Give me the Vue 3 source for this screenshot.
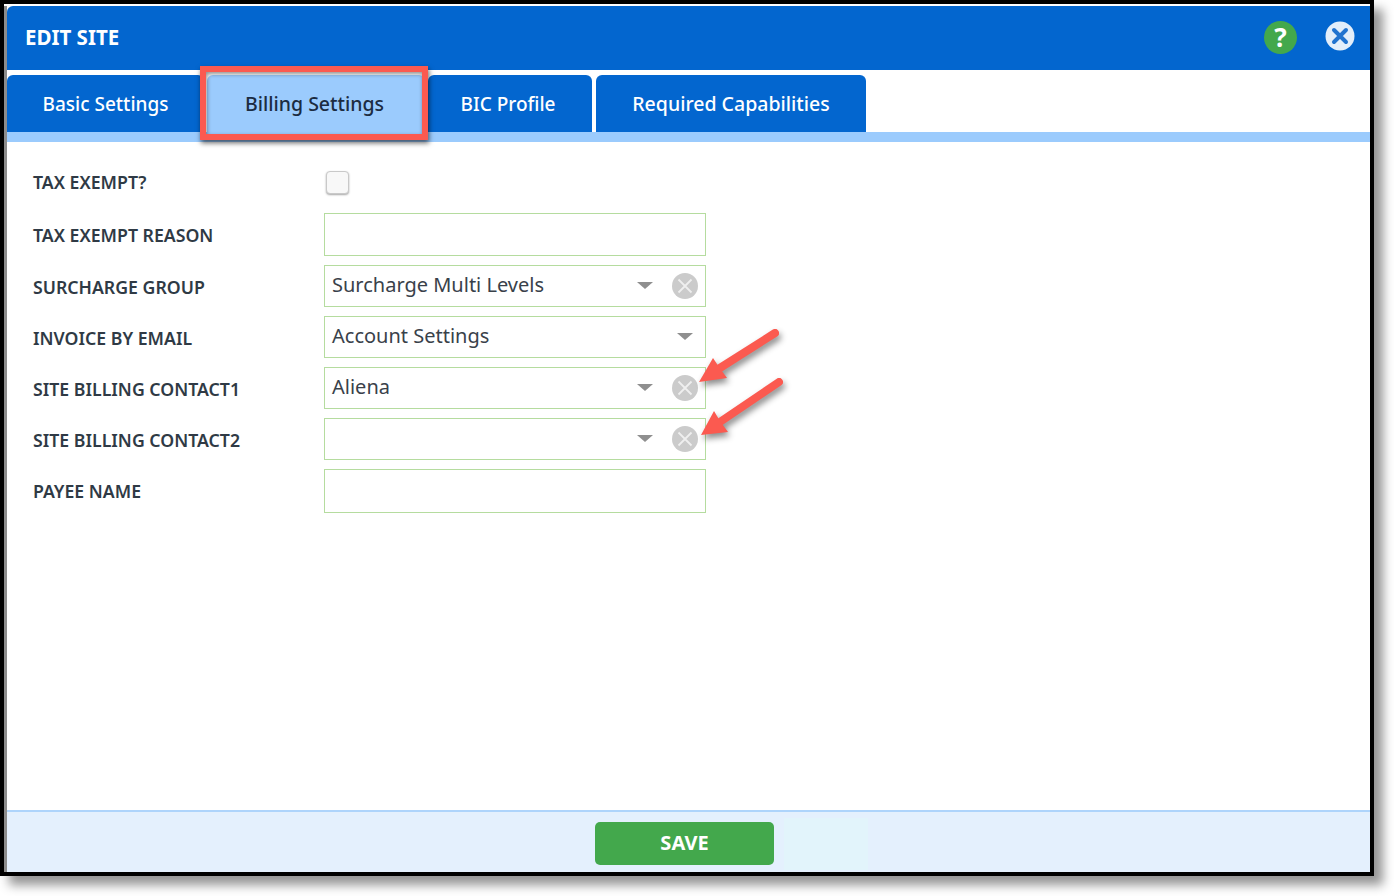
<script setup>
const tabs = [
  { label: 'Basic Settings', cls: 'basic' },
  { label: 'Billing Settings', cls: 'billing' },
  { label: 'BIC Profile', cls: 'bic' },
  { label: 'Required Capabilities', cls: 'caps' }
]
const rows = [
  { label: 'TAX EXEMPT?', type: 'check' },
  { label: 'TAX EXEMPT REASON', type: 'input', h: 43 },
  { label: 'SURCHARGE GROUP', type: 'select', value: 'Surcharge Multi Levels', clear: true, h: 42 },
  { label: 'INVOICE BY EMAIL', type: 'select', value: 'Account Settings', clear: false, h: 42 },
  { label: 'SITE BILLING CONTACT1', type: 'select', value: 'Aliena', clear: true, h: 42 },
  { label: 'SITE BILLING CONTACT2', type: 'select', value: '', clear: true, h: 42 },
  { label: 'PAYEE NAME', type: 'input', h: 44 }
]
</script>

<template>
  <div class="page">
    <div class="frame">
      <div class="window">
        <header class="titlebar">
          <h1 class="title">EDIT SITE</h1>
          <div class="title-icons">
            <span class="help">?</span>
            <svg class="close" width="30" height="30" viewBox="0 0 30 30">
              <circle cx="15" cy="15" r="14.5" fill="#e3eefa" />
              <path d="M9 9 L21 21 M21 9 L9 21" stroke="#2273cf" stroke-width="4" stroke-linecap="round" />
            </svg>
          </div>
        </header>
        <nav class="tabs">
          <div v-for="t in tabs" :key="t.label" class="tab" :class="t.cls">{{ t.label }}</div>
        </nav>
        <main class="form">
          <div v-for="r in rows" :key="r.label" class="row" :class="'row-' + r.type">
            <label class="label">{{ r.label }}</label>
            <span v-if="r.type === 'check'" class="check"></span>
            <div v-else class="field" :style="{ height: r.h + 'px' }">
              <template v-if="r.type === 'select'">
                <span class="value">{{ r.value }}</span>
                <span class="caret" :class="{ far: !r.clear }"></span>
                <svg v-if="r.clear" class="clear" width="26" height="26" viewBox="0 0 26 26">
                  <circle cx="13" cy="13" r="13" fill="#cbcbcb" />
                  <path d="M6.5 6.5 L19.5 19.5 M19.5 6.5 L6.5 19.5" stroke="#efefef" stroke-width="1.8" />
                </svg>
              </template>
            </div>
          </div>
        </main>
        <footer class="footer">
          <button class="save">SAVE</button>
          <span class="ghost"></span>
        </footer>
      </div>

      <div class="callout"></div>
      <svg class="arrows" width="1374" height="876" viewBox="0 0 1374 876">
        <g class="arrow">
          <line x1="775" y1="333" x2="712" y2="373" stroke="#fb5a50" stroke-width="8" stroke-linecap="round" />
          <polygon points="699,382 713,358 719,367 727,378" fill="#fb5a50" />
        </g>
        <g class="arrow">
          <line x1="779" y1="382" x2="714" y2="426" stroke="#fb5a50" stroke-width="8" stroke-linecap="round" />
          <polygon points="701,435 714,411 720,421 728,432" fill="#fb5a50" />
        </g>
      </svg>
    </div>
  </div>
</template>

<style scoped>
.page {
  height: 896px;
  overflow: hidden;
}
.frame {
  position: relative;
  box-sizing: border-box;
  width: 1374px;
  height: 876px;
  border: 4px solid #000;
  background: #fff;
  padding-top: 2px;
  box-shadow: 9px 9px 10px rgba(0, 0, 0, 0.42);
  font-family: "Noto Sans", "Open Sans", sans-serif;
  color: #2f3a45;
}
.window {
  box-sizing: border-box;
  height: 866px;
  border-left: 3px solid #8c8c8c;
  display: flex;
  flex-direction: column;
}
.titlebar {
  box-sizing: border-box;
  height: 64px;
  flex: none;
  background: #0366cf;
  border-top-left-radius: 6px;
  display: flex;
  align-items: center;
  justify-content: space-between;
  padding: 0 15px 2px 18px;
}
.title {
  margin: 0;
  font-size: 20.5px;
  font-weight: 700;
  color: #fff;
}
.title-icons {
  display: flex;
  align-items: center;
  gap: 28px;
}
.help {
  width: 33px;
  height: 33px;
  border-radius: 50%;
  background: #43a84c;
  color: #fff;
  font-size: 26px;
  font-weight: 700;
  line-height: 33px;
  text-align: center;
}
.close {
  display: block;
  margin-top: -2px;
}
.tabs {
  flex: none;
  height: 72px;
  box-sizing: border-box;
  padding-top: 5px;
  display: flex;
  border-bottom: 10px solid #9bcbfd;
}
.tab {
  height: 57px;
  box-sizing: border-box;
  border-radius: 6px 6px 0 0;
  background: #0366cf;
  color: #fff;
  font-size: 19.5px;
  font-weight: 500;
  line-height: 58px;
  text-align: center;
  white-space: nowrap;
}
.basic { width: 197px; margin-right: 3px; font-size: 19px; }
.billing { width: 218px; margin-right: 3px; padding-right: 3px; background: #9bcbfd; color: #1b2c42; }
.bic { width: 164px; margin-right: 4px; padding-right: 4px; font-size: 19px; }
.caps { width: 270px; }
.form {
  flex: none;
  height: 668px;
  box-sizing: border-box;
  padding: 18px 0 0 26px;
  display: flex;
  flex-direction: column;
  gap: 9px;
}
.row {
  display: flex;
  align-items: center;
}
.row-check {
  min-height: 44px;
}
.label {
  width: 291px;
  font-size: 17.7px;
  font-weight: 600;
}
.row-select .label {
  padding-top: 2px;
}
.check {
  width: 21px;
  height: 21px;
  margin-left: 2px;
  border: 1px solid #c9c9c9;
  border-radius: 4px;
  background: #f8f8f8;
  box-shadow: 0 1px 2px rgba(0, 0, 0, 0.35);
}
.field {
  box-sizing: border-box;
  width: 382px;
  border: 1px solid #b5dc9f;
  display: flex;
  align-items: center;
  position: relative;
  padding: 0 0 4px 7px;
}
.value {
  font-size: 20px;
  color: #39414a;
  white-space: nowrap;
}
.caret {
  position: absolute;
  left: 312px;
  top: 16px;
  width: 0;
  height: 0;
  border-left: 8px solid transparent;
  border-right: 8px solid transparent;
  border-top: 7px solid #8f8f8f;
}
.caret.far {
  left: 352px;
}
.clear {
  position: absolute;
  left: 347px;
  top: 7px;
}
.footer {
  flex: 1;
  min-height: 0;
  background: #e4f0fd;
  border-top: 2px solid #aed4fb;
  display: flex;
  justify-content: center;
  position: relative;
  padding: 10px 8px 0 0;
  box-sizing: border-box;
}
.save {
  width: 179px;
  height: 43px;
  border: 0;
  border-radius: 5px;
  background: #43a84c;
  color: #fff;
  font-family: inherit;
  font-size: 20px;
  font-weight: 700;
  padding: 0 0 2px;
}
.ghost {
  position: absolute;
  left: 777px;
  top: 6px;
  width: 84px;
  bottom: 2px;
  background: #e2f4fb;
}
.callout {
  position: absolute;
  left: 196px;
  top: 62px;
  width: 228px;
  height: 74px;
  box-sizing: border-box;
  border: 6px solid #fb5a50;
  box-shadow: 1px 3px 5px rgba(0, 0, 0, 0.6), inset 1px 2px 4px rgba(0, 0, 0, 0.45);
}
.arrows {
  position: absolute;
  left: -4px;
  top: -4px;
  pointer-events: none;
}
.arrow {
  filter: drop-shadow(2px 4px 3px rgba(0, 0, 0, 0.45));
}
</style>

<style>
html, body { background: #fff; }
</style>
